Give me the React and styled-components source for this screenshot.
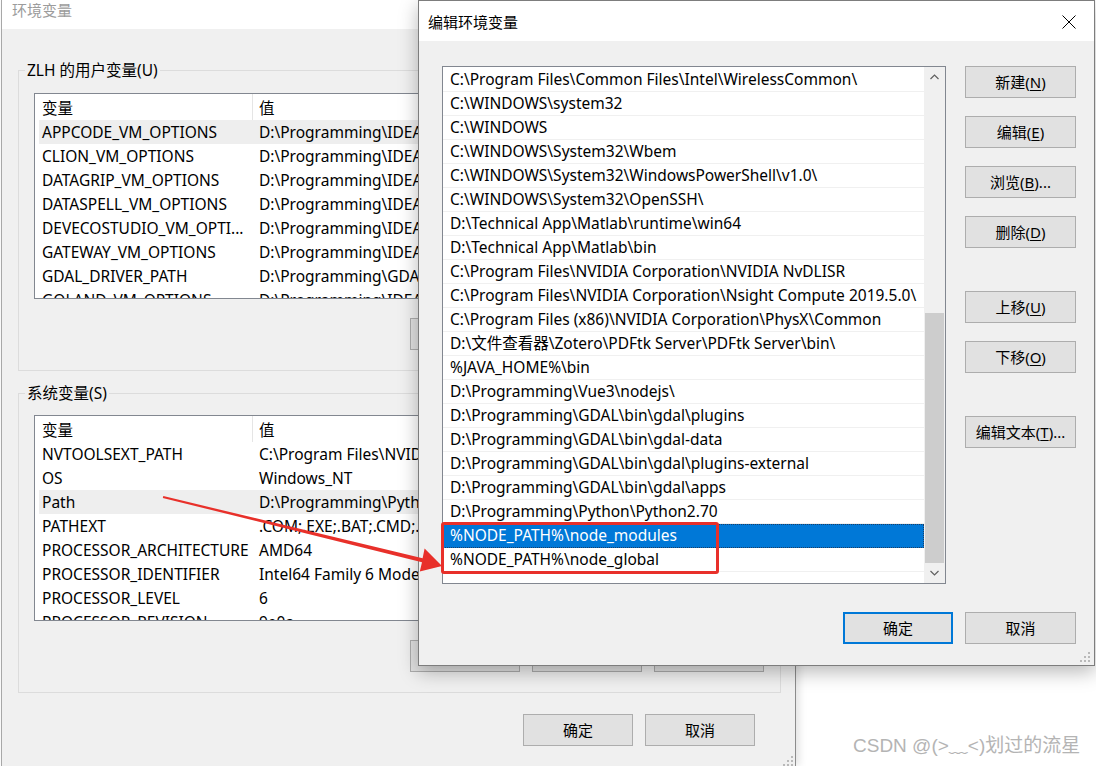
import React from 'react';
import styled, { createGlobalStyle } from 'styled-components';

const GlobalStyle = createGlobalStyle`
  html, body { margin: 0; padding: 0; background: #fff; overflow: hidden; }
  body {
    font-family: "Noto Sans", "Noto Sans CJK SC", sans-serif;
    font-size: 15.5px;
    color: #000;
  }
  * { box-sizing: border-box; }
`;

const userVars = [
  ['APPCODE_VM_OPTIONS', 'D:\\Programming\\IDEA\\jetbra\\vmoptions\\appcode.vmoptions', true],
  ['CLION_VM_OPTIONS', 'D:\\Programming\\IDEA\\jetbra\\vmoptions\\clion.vmoptions'],
  ['DATAGRIP_VM_OPTIONS', 'D:\\Programming\\IDEA\\jetbra\\vmoptions\\datagrip.vmoptions'],
  ['DATASPELL_VM_OPTIONS', 'D:\\Programming\\IDEA\\jetbra\\vmoptions\\dataspell.vmoptions'],
  ['DEVECOSTUDIO_VM_OPTI...', 'D:\\Programming\\IDEA\\jetbra\\vmoptions\\devecostudio.vmoptions'],
  ['GATEWAY_VM_OPTIONS', 'D:\\Programming\\IDEA\\jetbra\\vmoptions\\gateway.vmoptions'],
  ['GDAL_DRIVER_PATH', 'D:\\Programming\\GDAL\\bin\\gdal\\plugins'],
  ['GOLAND_VM_OPTIONS', 'D:\\Programming\\IDEA\\jetbra\\vmoptions\\goland.vmoptions'],
];

const sysVars = [
  ['NVTOOLSEXT_PATH', 'C:\\Program Files\\NVIDIA Corporation\\NvToolsExt\\'],
  ['OS', 'Windows_NT'],
  ['Path', 'D:\\Programming\\Python\\Python2.70;D:\\Programming\\Python', true],
  ['PATHEXT', '.COM;.EXE;.BAT;.CMD;.VBS;.VBE;.JS;.JSE;.WSF;.WSH;.MSC'],
  ['PROCESSOR_ARCHITECTURE', 'AMD64'],
  ['PROCESSOR_IDENTIFIER', 'Intel64 Family 6 Model 158 Stepping 10, GenuineIntel'],
  ['PROCESSOR_LEVEL', '6'],
  ['PROCESSOR_REVISION', '9e0a'],
];

const paths = [
  'C:\\Program Files\\Common Files\\Intel\\WirelessCommon\\',
  'C:\\WINDOWS\\system32',
  'C:\\WINDOWS',
  'C:\\WINDOWS\\System32\\Wbem',
  'C:\\WINDOWS\\System32\\WindowsPowerShell\\v1.0\\',
  'C:\\WINDOWS\\System32\\OpenSSH\\',
  'D:\\Technical App\\Matlab\\runtime\\win64',
  'D:\\Technical App\\Matlab\\bin',
  'C:\\Program Files\\NVIDIA Corporation\\NVIDIA NvDLISR',
  'C:\\Program Files\\NVIDIA Corporation\\Nsight Compute 2019.5.0\\',
  'C:\\Program Files (x86)\\NVIDIA Corporation\\PhysX\\Common',
  'D:\\文件查看器\\Zotero\\PDFtk Server\\PDFtk Server\\bin\\',
  '%JAVA_HOME%\\bin',
  'D:\\Programming\\Vue3\\nodejs\\',
  'D:\\Programming\\GDAL\\bin\\gdal\\plugins',
  'D:\\Programming\\GDAL\\bin\\gdal-data',
  'D:\\Programming\\GDAL\\bin\\gdal\\plugins-external',
  'D:\\Programming\\GDAL\\bin\\gdal\\apps',
  'D:\\Programming\\Python\\Python2.70',
  '%NODE_PATH%\\node_modules',
  '%NODE_PATH%\\node_global',
];

const Desktop = styled.div`
  position: relative;
  width: 1096px;
  height: 766px;
  overflow: hidden;
  background: #fff;
`;

/* ---- back window: 环境变量 ---- */
const EnvWindow = styled.div`
  position: absolute;
  left: 1px;
  top: 0;
  width: 795px;
  height: 766px;
  display: flex;
  flex-direction: column;
  background: #f0f0f0;
  border-left: 1px solid #a8a8a8;
  border-right: 1px solid #8c8c8c;
  box-shadow: 3px 0 8px rgba(0, 0, 0, 0.12);
`;

const TitleBar = styled.div`
  flex: none;
  height: ${(p) => p.$h}px;
  background: #fff;
  display: flex;
  align-items: ${(p) => (p.$top ? 'flex-start' : 'center')};
  justify-content: space-between;
  padding: ${(p) => (p.$top ? '0 0 0 10px' : '2px 0 0 9px')};
  color: ${(p) => (p.$dim ? '#9c9c9c' : '#000')};
  font-size: 15px;
  line-height: 20px;
`;

const CloseBox = styled.div`
  width: 46px;
  height: 38px;
  display: flex;
  align-items: center;
  justify-content: center;
  margin-right: 2px;
`;

const EnvBody = styled.div`
  flex: 1;
  display: flex;
  flex-direction: column;
  padding: 0 14px 0 16px;
`;

const GroupBox = styled.div`
  margin-top: ${(p) => p.$mt}px;
  border: 1px solid #dcdcdc;
  padding: 0 16px 20px 15px;
`;

const Legend = styled.div`
  width: fit-content;
  margin: -11px 0 0 -9px;
  padding: 0 2px;
  height: 20px;
  line-height: 20px;
  background: #f0f0f0;
`;

const VarTable = styled.div`
  margin-top: ${(p) => p.$mt}px;
  height: 206px;
  background: #fff;
  border: 1px solid #828790;
  overflow: hidden;
  padding-left: 4px;
`;

const HeadRow = styled.div`
  display: grid;
  grid-template-columns: 213px 1fr;
  height: 26px;
`;

const HeadCell = styled.div`
  display: flex;
  align-items: center;
  padding-left: ${(p) => (p.$first ? 3 : 6)}px;
  border-left: ${(p) => (p.$first ? 'none' : '1px solid #e5e5e5')};
`;

const DataRow = styled.div`
  display: grid;
  grid-template-columns: 213px 1fr;
  height: 24px;
  align-items: center;
  background: ${(p) => (p.$hl ? '#eeeeee' : 'transparent')};
`;

const Cell = styled.div`
  padding-left: ${(p) => (p.$first ? 3 : 7)}px;
  white-space: nowrap;
  overflow: hidden;
  text-overflow: ellipsis;
  line-height: 22px;
  padding-bottom: 1px;
`;

const ButtonRow = styled.div`
  display: flex;
  justify-content: flex-end;
  gap: 12px;
  margin-top: ${(p) => p.$mt}px;
  padding-right: ${(p) => p.$pr || 0}px;
`;

const Button = styled.div`
  flex: none;
  width: ${(p) => p.$w || 110}px;
  height: 32px;
  margin-top: ${(p) => p.$mt || 0}px;
  display: flex;
  align-items: center;
  justify-content: center;
  background: #e1e1e1;
  border: ${(p) => (p.$primary ? '2px solid #0078d7' : '1px solid #adadad')};
  font-size: 15px;
  line-height: 20px;
  white-space: nowrap;

  u {
    text-decoration-thickness: 1px;
    text-underline-offset: 2px;
  }
`;

/* ---- front dialog: 编辑环境变量 ---- */
const EditDialog = styled.div`
  position: absolute;
  left: 418px;
  top: 0;
  width: 677px;
  height: 666px;
  display: flex;
  flex-direction: column;
  background: #f0f0f0;
  border: 1px solid #7d7d7d;
  box-shadow: 0 6px 18px rgba(0, 0, 0, 0.28);
`;

const DialogBody = styled.div`
  position: relative;
  flex: 1;
  display: flex;
  flex-direction: column;
  padding: 25px 18px 0 23px;
`;

const MainRow = styled.div`
  display: grid;
  grid-template-columns: 504px 111px;
  gap: 19px;
`;

const ListBox = styled.div`
  height: 518px;
  display: flex;
  background: #fff;
  border: 1px solid #828790;
`;

const ListRows = styled.div`
  flex: 1;
  padding-top: 1px;
  overflow: hidden;
`;

const PathRow = styled.div`
  height: 24px;
  display: flex;
  align-items: center;
  padding: 0 0 1px 7px;
  white-space: nowrap;
  line-height: 22px;
  border-bottom: 1px solid ${(p) => (p.$selected ? '#0078d7' : '#f0f0f0')};
  background: ${(p) => (p.$selected ? '#0078d7' : '#fff')};
  color: ${(p) => (p.$selected ? '#fff' : '#000')};
  outline: ${(p) => (p.$selected ? '1px dotted #1c3f66' : 'none')};
  outline-offset: -1px;
`;

const ScrollBar = styled.div`
  flex: none;
  width: 21px;
  display: flex;
  flex-direction: column;
  background: #f0f0f0;
`;

const ScrollArrow = styled.div`
  height: 20px;
  display: flex;
  align-items: center;
  justify-content: center;
`;

const ScrollTrack = styled.div`
  flex: 1;
  display: flex;
  flex-direction: column;
  padding: 0 1px;
`;

const Thumb = styled.div`
  flex: 1;
  margin-top: ${(p) => p.$offset}px;
  background: #cdcdcd;
`;

const SideButtons = styled.div`
  display: flex;
  flex-direction: column;
`;

const Grip = styled.svg`
  position: absolute;
  right: ${(p) => p.$r}px;
  bottom: ${(p) => p.$b}px;
`;

/* ---- annotations ---- */
const Highlight = styled.div`
  position: absolute;
  left: 441px;
  top: 522px;
  width: 278px;
  height: 52px;
  border: 3px solid #e8302a;
  border-radius: 3px;
`;

const ArrowLayer = styled.svg`
  position: absolute;
  left: 0;
  top: 0;
  pointer-events: none;
`;

const Watermark = styled.div`
  position: absolute;
  left: 853px;
  top: 733px;
  font-family: "Liberation Sans", "Noto Sans CJK SC", sans-serif;
  font-size: 19px;
  line-height: 25px;
  color: #b4b4b4;
  white-space: nowrap;
`;

const ChevronUp = () => (
  <svg width="9" height="6" viewBox="0 0 9 6">
    <polyline points="0.5,5 4.5,1 8.5,5" fill="none" stroke="#606060" strokeWidth="1.2" />
  </svg>
);

const ChevronDown = () => (
  <svg width="9" height="6" viewBox="0 0 9 6">
    <polyline points="0.5,1 4.5,5 8.5,1" fill="none" stroke="#606060" strokeWidth="1.2" />
  </svg>
);

const GripDots = ({ r, b }) => (
  <Grip $r={r} $b={b} width="10" height="10" viewBox="0 0 10 10">
    {[[8, 0], [4, 4], [8, 4], [0, 8], [4, 8], [8, 8]].map(([x, y]) => (
      <rect key={`${x}-${y}`} x={x} y={y} width="2" height="2" fill="#b9b9b9" />
    ))}
  </Grip>
);

const VarGroup = ({ title, rows, mt, tableMt }) => (
  <GroupBox $mt={mt}>
    <Legend>{title}</Legend>
    <VarTable $mt={tableMt}>
      <HeadRow>
        <HeadCell $first>变量</HeadCell>
        <HeadCell>值</HeadCell>
      </HeadRow>
      {rows.map(([name, value, hl]) => (
        <DataRow key={name} $hl={hl}>
          <Cell $first>{name}</Cell>
          <Cell>{value}</Cell>
        </DataRow>
      ))}
    </VarTable>
    <ButtonRow $mt={19}>
      <Button>新建(<u>W</u>)...</Button>
      <Button>编辑(<u>I</u>)...</Button>
      <Button>删除(<u>L</u>)</Button>
    </ButtonRow>
  </GroupBox>
);

const App = () => {
  return (
    <Desktop>
      <GlobalStyle />

      <EnvWindow>
        <TitleBar $h={29} $dim $top>环境变量</TitleBar>
        <EnvBody>
          <VarGroup title="ZLH 的用户变量(U)" rows={userVars} mt={41} tableMt={13} />
          <VarGroup title="系统变量(S)" rows={sysVars} mt={22} tableMt={12} />
          <ButtonRow $mt={21} $pr={26}>
            <Button>确定</Button>
            <Button>取消</Button>
          </ButtonRow>
        </EnvBody>
        <GripDots r={2} b={0} />
      </EnvWindow>

      <EditDialog>
        <TitleBar $h={40}>
          编辑环境变量
          <CloseBox>
            <svg width="14" height="14" viewBox="0 0 14 14">
              <line x1="0.5" y1="0.5" x2="13.5" y2="13.5" stroke="#000" strokeWidth="1" />
              <line x1="13.5" y1="0.5" x2="0.5" y2="13.5" stroke="#000" strokeWidth="1" />
            </svg>
          </CloseBox>
        </TitleBar>
        <DialogBody>
          <MainRow>
            <ListBox>
              <ListRows>
                {paths.map((p, i) => (
                  <PathRow key={p} $selected={i === 19}>{p}</PathRow>
                ))}
              </ListRows>
              <ScrollBar>
                <ScrollArrow><ChevronUp /></ScrollArrow>
                <ScrollTrack>
                  <Thumb $offset={226} />
                </ScrollTrack>
                <ScrollArrow><ChevronDown /></ScrollArrow>
              </ScrollBar>
            </ListBox>
            <SideButtons>
              <Button $w={111}>新建(<u>N</u>)</Button>
              <Button $w={111} $mt={18}>编辑(<u>E</u>)</Button>
              <Button $w={111} $mt={18}>浏览(<u>B</u>)...</Button>
              <Button $w={111} $mt={18}>删除(<u>D</u>)</Button>
              <Button $w={111} $mt={43}>上移(<u>U</u>)</Button>
              <Button $w={111} $mt={18}>下移(<u>O</u>)</Button>
              <Button $w={111} $mt={43}>编辑文本(<u>T</u>)...</Button>
            </SideButtons>
          </MainRow>
          <ButtonRow $mt={28}>
            <Button $w={110} $primary>确定</Button>
            <Button $w={111}>取消</Button>
          </ButtonRow>
          <GripDots r={4} b={3} />
        </DialogBody>
      </EditDialog>

      <Highlight />
      <ArrowLayer width="1096" height="766" viewBox="0 0 1096 766">
        <polygon
          points="163.3,496.1 422.6,558.2 424.6,548.5 442,566 419.8,571.4 422,562.3 162.8,497.9"
          fill="#e8302a"
        />
      </ArrowLayer>

      <Watermark>CSDN @(&gt;﹏&lt;)划过的流星</Watermark>
    </Desktop>
  );
};

export default App;
